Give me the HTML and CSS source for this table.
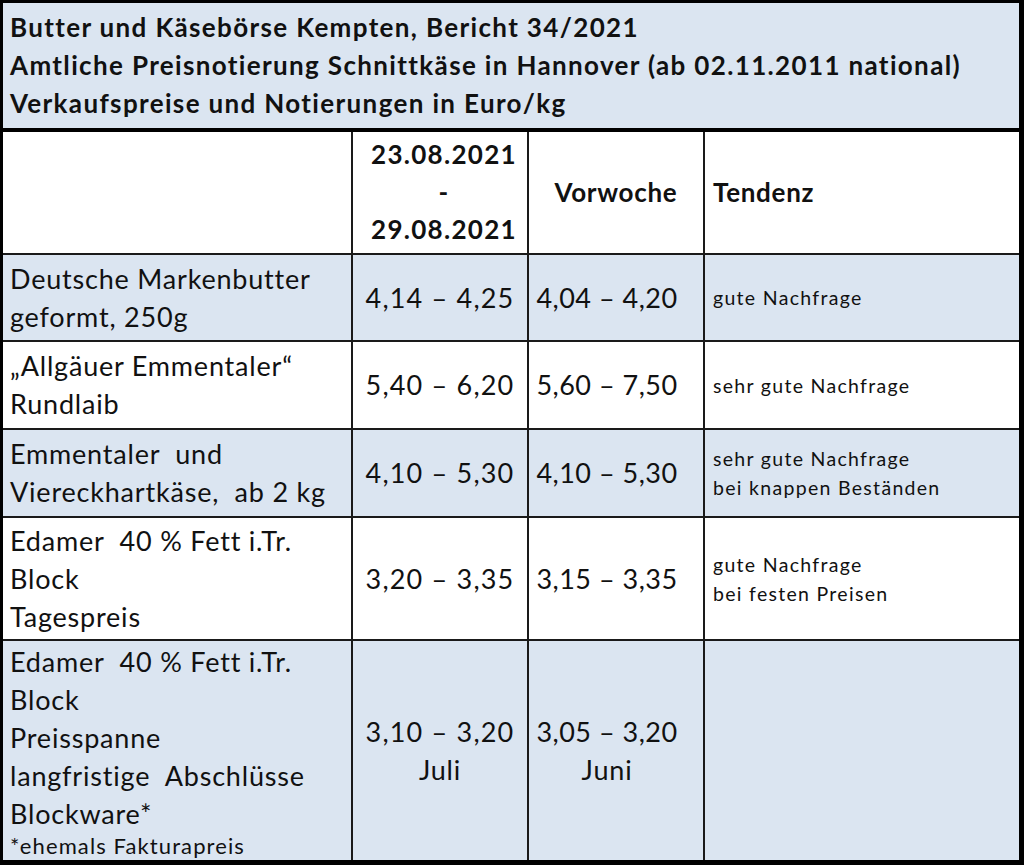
FILE: index.html
```html
<!DOCTYPE html>
<html lang="de">
<head>
<meta charset="utf-8">
<title>Butter und Käsebörse Kempten, Bericht 34/2021</title>
<link rel="stylesheet" href="styles.css">
</head>
<body>
<div class="frame">
  <div class="head">
    <div class="head-line">Butter und Käsebörse Kempten, Bericht 34/2021</div>
    <div class="head-line">Amtliche Preisnotierung Schnittkäse in Hannover (ab 02.11.2011 national)</div>
    <div class="head-line">Verkaufspreise und Notierungen in Euro/kg</div>
  </div>
  <div class="grid">
    <div class="cell white"></div>
    <div class="cell white center th date"><div>23.08.2021<br>-<br>29.08.2021</div></div>
    <div class="cell white center th"><div>Vorwoche</div></div>
    <div class="cell white tend-head th"><div>Tendenz</div></div>

    <div class="cell blue name"><div>Deutsche Markenbutter<br>geformt, 250g</div></div>
    <div class="cell blue center price"><div>4,14 – 4,25</div></div>
    <div class="cell blue center price prev"><div>4,04 – 4,20</div></div>
    <div class="cell blue tend"><div>gute Nachfrage</div></div>

    <div class="cell white name"><div>„Allgäuer Emmentaler“<br>Rundlaib</div></div>
    <div class="cell white center price"><div>5,40 – 6,20</div></div>
    <div class="cell white center price prev"><div>5,60 – 7,50</div></div>
    <div class="cell white tend"><div>sehr gute Nachfrage</div></div>

    <div class="cell blue name"><div>Emmentaler&nbsp; und<br>Viereckhartkäse,&nbsp; ab 2 kg</div></div>
    <div class="cell blue center price"><div>4,10 – 5,30</div></div>
    <div class="cell blue center price prev"><div>4,10 – 5,30</div></div>
    <div class="cell blue tend"><div>sehr gute Nachfrage<br>bei knappen Beständen</div></div>

    <div class="cell white name"><div>Edamer&nbsp; 40 % Fett i.Tr.<br>Block<br>Tagespreis</div></div>
    <div class="cell white center price"><div>3,20 – 3,35</div></div>
    <div class="cell white center price prev"><div>3,15 – 3,35</div></div>
    <div class="cell white tend"><div>gute Nachfrage<br>bei festen Preisen</div></div>

    <div class="cell blue name"><div>Edamer&nbsp; 40 % Fett i.Tr.<br>Block<br>Preisspanne<br>langfristige&nbsp; Abschlüsse<br>Blockware*<div class="foot">*ehemals Fakturapreis</div></div></div>
    <div class="cell blue center price"><div>3,10 – 3,20<br><span class="month">Juli</span></div></div>
    <div class="cell blue center price prev"><div>3,05 – 3,20<br><span class="month">Juni</span></div></div>
    <div class="cell blue tend"></div>
  </div>
</div>
</body>
</html>
```

FILE: styles.css
```css
* { box-sizing: border-box; }
html, body { margin: 0; padding: 0; background: #000; }
body {
  font-family: Lato, "Liberation Sans", sans-serif;
  color: #111111;
}
.frame {
  width: 1024px;
  height: 865px;
  background: #000;
  padding: 3px 5px 5px 3px;
  display: flex;
  flex-direction: column;
  gap: 4px;
}
.head {
  height: 125px;
  background: #dbe5f1;
  padding: 5px 0 0 7px;
  font-weight: 700;
  font-size: 26px;
  letter-spacing: 1.35px;
  line-height: 38px;
}
.head-line { white-space: nowrap; }
.grid {
  display: grid;
  grid-template-columns: 348px 174px 174px 314px;
  grid-template-rows: 121px 85px 86px 86px 121px 219px;
  gap: 2px;
  background: #1a1a1a;
}
.cell {
  display: flex;
  align-items: center;
  font-size: 27px;
  letter-spacing: 0.8px;
  line-height: 38px;
  white-space: nowrap;
}
.white { background: #ffffff; }
.blue { background: #dbe5f1; }
.th {
  font-weight: 700;
  font-size: 26px;
  letter-spacing: 0.7px;
  line-height: 37.5px;
}
.date { letter-spacing: 1.3px; padding-left: 8px; }
.center { justify-content: center; text-align: center; }
.price { letter-spacing: 1.2px; }
.month { letter-spacing: 0.8px; }
.prev { padding-right: 18px; letter-spacing: 0.5px; }
.name { padding-left: 7px; }
.tend-head { padding-left: 8px; }
.tend {
  padding-left: 8px;
  font-size: 19.5px;
  letter-spacing: 1.3px;
  line-height: 29px;
}
.foot {
  font-size: 22px;
  letter-spacing: 1.1px;
  line-height: 26px;
}
```
